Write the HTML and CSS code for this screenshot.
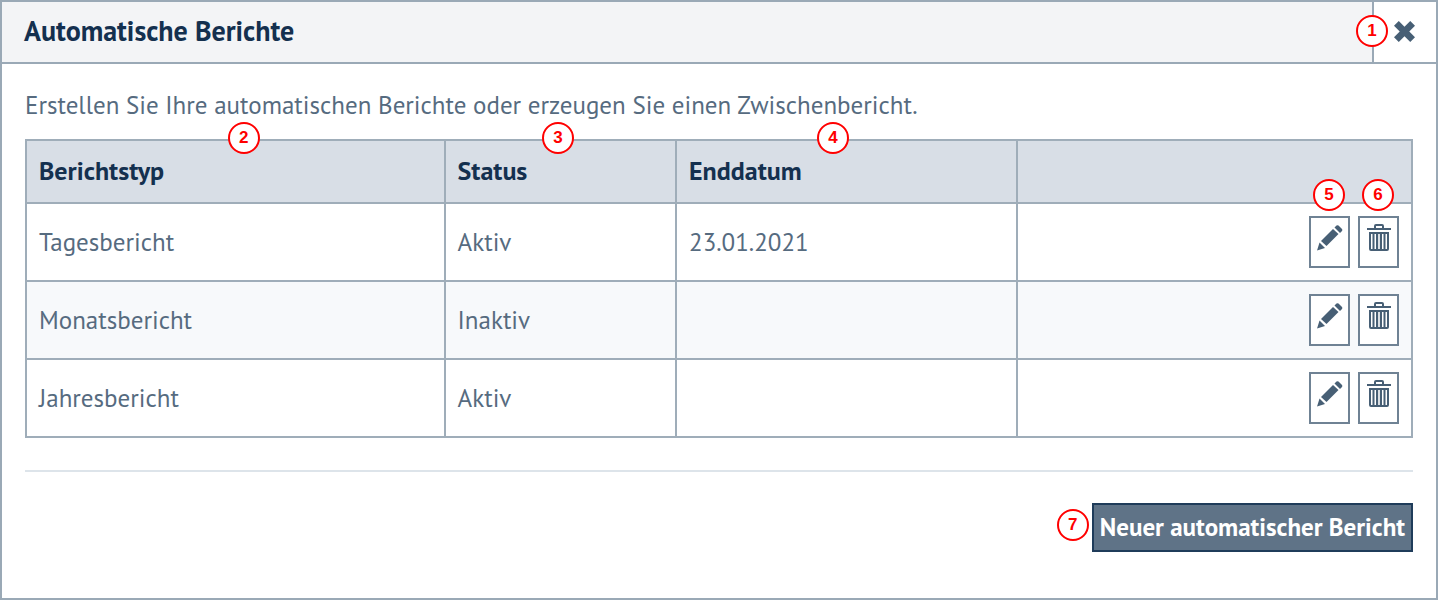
FILE: index.html
```html
<!DOCTYPE html>
<html lang="de">
<head>
    <meta charset="UTF-8">
    <meta name="viewport" content="width=device-width, initial-scale=1.0">
    <title>Automatische Berichte</title>
    <link rel="stylesheet" href="styles.css">
</head>
<body>
    <!-- icons used more than once -->
    <svg class="icon-defs" aria-hidden="true">
        <symbol id="icon-edit" viewBox="0 0 28 28">
            <path d="M5 17 L17 5 L22.5 10 L10.5 22 Z"/>
            <path d="M18.5 3.5 L20.5 1.5 Q21.5 .8 22.5 1.6 L26 5 Q26.8 6 26 7 L24 9 Z"/>
            <path d="M3.5 18.5 L9 24 L1 26.5 Z"/>
        </symbol>
        <symbol id="icon-delete" viewBox="0 0 24 28">
            <path d="M7 4 V2 Q7 0 9 0 H15 Q17 0 17 2 V4 H24 V6 H0 V4 Z M9 4 H15 V2 H9 Z" fill-rule="evenodd"/>
            <path d="M2 8 H22 V25 Q22 27 20 27 H4 Q2 27 2 25 Z M4 10 V25 H5.5 V10 Z M7.5 10 V25 H9 V10 Z M11.2 10 V25 H12.8 V10 Z M15 10 V25 H16.5 V10 Z M18.5 10 V25 H20 V10 Z" fill-rule="evenodd"/>
        </symbol>
    </svg>

    <div class="dialog" role="dialog" aria-labelledby="title">
        <div class="dialog-header">
            <h1 id="title">Automatische Berichte</h1>
            <button class="close" type="button" aria-label="Schließen">
                <svg viewBox="0 0 22 22"><path d="M5 0 L11 6 L17 0 L22 5 L16 11 L22 17 L17 22 L11 16 L5 22 L0 17 L6 11 L0 5 Z"/></svg>
                <span class="marker marker-close">1</span>
            </button>
        </div>

        <div class="dialog-body">
            <p>Erstellen Sie Ihre automatischen Berichte oder erzeugen Sie einen Zwischenbericht.</p>

            <table>
                <thead>
                    <tr>
                        <th class="col-type">Berichtstyp<span class="marker marker-type">2</span></th>
                        <th class="col-status">Status<span class="marker marker-status">3</span></th>
                        <th class="col-date">Enddatum<span class="marker marker-date">4</span></th>
                        <th class="col-actions"></th>
                    </tr>
                </thead>
                <tbody>
                    <tr>
                        <td>Tagesbericht</td>
                        <td>Aktiv</td>
                        <td>23.01.2021</td>
                        <td>
                            <div class="actions">
                                <button class="action" type="button" aria-label="Bearbeiten"><svg><use href="#icon-edit"/></svg><span class="marker marker-action">5</span></button>
                                <button class="action" type="button" aria-label="Löschen"><svg><use href="#icon-delete"/></svg><span class="marker marker-action">6</span></button>
                            </div>
                        </td>
                    </tr>
                    <tr>
                        <td>Monatsbericht</td>
                        <td>Inaktiv</td>
                        <td></td>
                        <td>
                            <div class="actions">
                                <button class="action" type="button" aria-label="Bearbeiten"><svg><use href="#icon-edit"/></svg></button>
                                <button class="action" type="button" aria-label="Löschen"><svg><use href="#icon-delete"/></svg></button>
                            </div>
                        </td>
                    </tr>
                    <tr>
                        <td>Jahresbericht</td>
                        <td>Aktiv</td>
                        <td></td>
                        <td>
                            <div class="actions">
                                <button class="action" type="button" aria-label="Bearbeiten"><svg><use href="#icon-edit"/></svg></button>
                                <button class="action" type="button" aria-label="Löschen"><svg><use href="#icon-delete"/></svg></button>
                            </div>
                        </td>
                    </tr>
                </tbody>
            </table>

            <div class="dialog-footer">
                <button class="new-report" type="button">Neuer automatischer Bericht<span class="marker marker-new">7</span></button>
            </div>
        </div>
    </div>
</body>
</html>
```
FILE: styles.css
```css
*{
    box-sizing: border-box;
}
body{
    margin: 0;
    font-family: "PT Sans", "Noto Sans", sans-serif;
    font-size: 25px;
    line-height: 32px;
    color: #566b7f;
    background-color: #fff;
}
button{
    font-family: inherit;
    cursor: pointer;
}
svg{
    display: block;
    fill: #475f75;
}
.icon-defs{
    display: none;
}

/* dialog */
.dialog{
    min-height: 100vh;
    border: 2px solid #9aa9b6;
    background-color: #fff;
}
.dialog-header{
    display: flex;
    justify-content: space-between;
    border-bottom: 2px solid #9aa9b6;
    background-color: #f3f4f6;
}
h1{
    margin: 0;
    padding: 13px 22px 15px;
    font-size: 28px;
    line-height: 32px;
    color: #14304f;
}
.close{
    position: relative;
    display: flex;
    align-items: center;
    justify-content: center;
    width: 64px;
    padding: 0 2px 2px 0;
    border: 0;
    border-left: 2px solid #9aa9b6;
    background-color: #fff;
}
.close svg{
    width: 21px;
    height: 21px;
}
.dialog-body{
    padding: 25px 23px;
}
p{
    margin: 0 0 18px;
}

/* table */
table{
    width: 100%;
    border-collapse: collapse;
    table-layout: fixed;
}
th,td{
    padding: 12px;
    border: 2px solid #9fadb9;
    text-align: left;
}
th{
    position: relative;
    padding: 14px 12px 15px;
    font-size: 26px;
    color: #14304f;
    background-color: #d8dee6;
}
tbody tr:nth-child(even){
    background-color: #f7f9fb;
}
.col-type{
    width: 30.2%;
}
.col-status{
    width: 16.7%;
}
.col-date{
    width: 24.6%;
}
.actions{
    display: flex;
    justify-content: flex-end;
    gap: 8px;
}
.action{
    position: relative;
    display: flex;
    justify-content: center;
    width: 41px;
    height: 52px;
    padding: 6px 0;
    border: 2px solid #6f8294;
    background-color: #fff;
}
.action svg{
    width: 28px;
    height: 28px;
}

/* footer */
.dialog-footer{
    display: flex;
    justify-content: flex-end;
    margin-top: 32px;
    padding-top: 31px;
    border-top: 2px solid #dde4ea;
}
.new-report{
    position: relative;
    padding: 6px;
    border: 2px solid #1f3c5a;
    font-size: 25px;
    font-weight: bold;
    line-height: 33px;
    color: #fff;
    background-color: #5f7387;
}

/* numbered markers */
.marker{
    position: absolute;
    width: 32px;
    height: 32px;
    border: 2px solid #f00;
    border-radius: 50%;
    font: bold 17px/28px "Liberation Sans", Arial, sans-serif;
    text-align: center;
    color: #f00;
    background-color: #fff;
}
.marker-close{
    top: 13px;
    left: -18px;
}
.marker-type,.marker-status,.marker-date{
    top: -19px;
    transform: translateX(-50%);
}
.marker-type{
    left: 52%;
}
.marker-status{
    left: 49%;
}
.marker-date{
    left: 46%;
}
.marker-action{
    top: -39px;
    left: 2px;
}
.marker-new{
    top: 4px;
    right: 100%;
    margin-right: 5px;
}
```
